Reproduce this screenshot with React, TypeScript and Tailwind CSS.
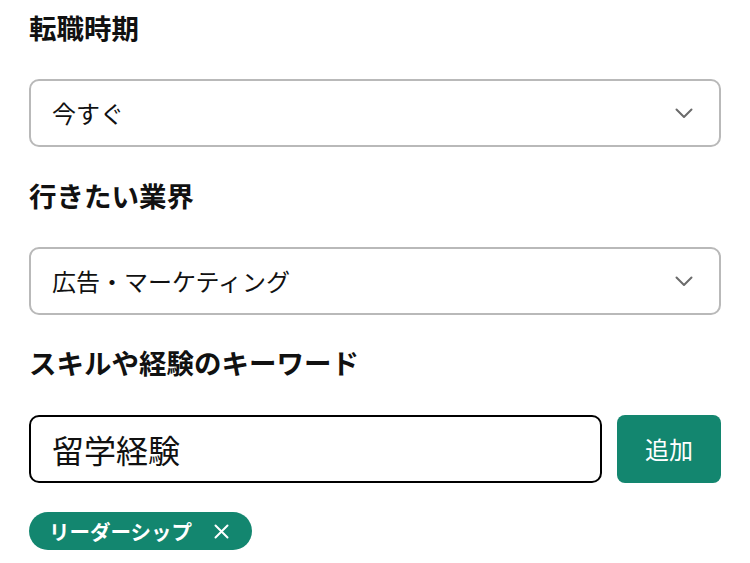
import React from "react";

const font = { fontFamily: '"Noto Sans CJK JP", "Noto Sans", sans-serif' };

const Chevron: React.FC = () => (
  <svg width="18" height="11" viewBox="0 0 18 11" fill="none" className="shrink-0">
    <polyline
      points="1.5,1.5 9,9 16.5,1.5"
      stroke="#6b6b6b"
      strokeWidth="2"
      strokeLinecap="round"
      strokeLinejoin="round"
    />
  </svg>
);

interface SelectBoxProps {
  value: string;
}

const SelectBox: React.FC<SelectBoxProps> = ({ value }) => (
  <div className="flex h-[68px] items-center justify-between rounded-[10px] border-2 border-[#b9b9b9] bg-white pl-[21px] pr-[26px]">
    <span className="text-[24px] leading-none text-[#111]">{value}</span>
    <Chevron />
  </div>
);

const Heading: React.FC<{ children: React.ReactNode }> = ({ children }) => (
  <h2 className="h-10 text-[27.5px] font-bold leading-10 text-[#111]">{children}</h2>
);

const App: React.FC = () => {
  const tags = ["リーダーシップ"];

  return (
    <div className="min-h-[563px] bg-white px-[29px] pt-[7px]" style={font}>
      <Heading>転職時期</Heading>
      <div className="mt-8">
        <SelectBox value="今すぐ" />
      </div>

      <div className="mt-7">
        <Heading>行きたい業界</Heading>
      </div>
      <div className="mt-8">
        <SelectBox value="広告・マーケティング" />
      </div>

      <div className="mt-[27px]">
        <Heading>スキルや経験のキーワード</Heading>
      </div>
      <div className="mt-[33px] flex gap-[15px]">
        <div className="flex h-[68px] flex-1 items-center rounded-[10px] border-2 border-black bg-white pl-[21px]">
          <span className="text-[32px] leading-none text-[#111]">留学経験</span>
        </div>
        <button className="h-[68px] w-[104px] rounded-[8px] bg-[#13866f] text-[24px] text-white">
          追加
        </button>
      </div>

      <div className="mt-[29px] flex flex-wrap gap-2">
        {tags.map((tag) => (
          <span
            key={tag}
            className="flex h-[38px] items-center gap-[22px] rounded-full bg-[#13866f] pl-[20px] pr-[23px] text-[20.5px] font-bold leading-none text-white"
          >
            {tag}
            <svg width="15" height="15" viewBox="0 0 15 15" fill="none">
              <path d="M1.5 1.5 L13.5 13.5 M13.5 1.5 L1.5 13.5" stroke="white" strokeWidth="2" strokeLinecap="round" />
            </svg>
          </span>
        ))}
      </div>
    </div>
  );
};

export default App;
